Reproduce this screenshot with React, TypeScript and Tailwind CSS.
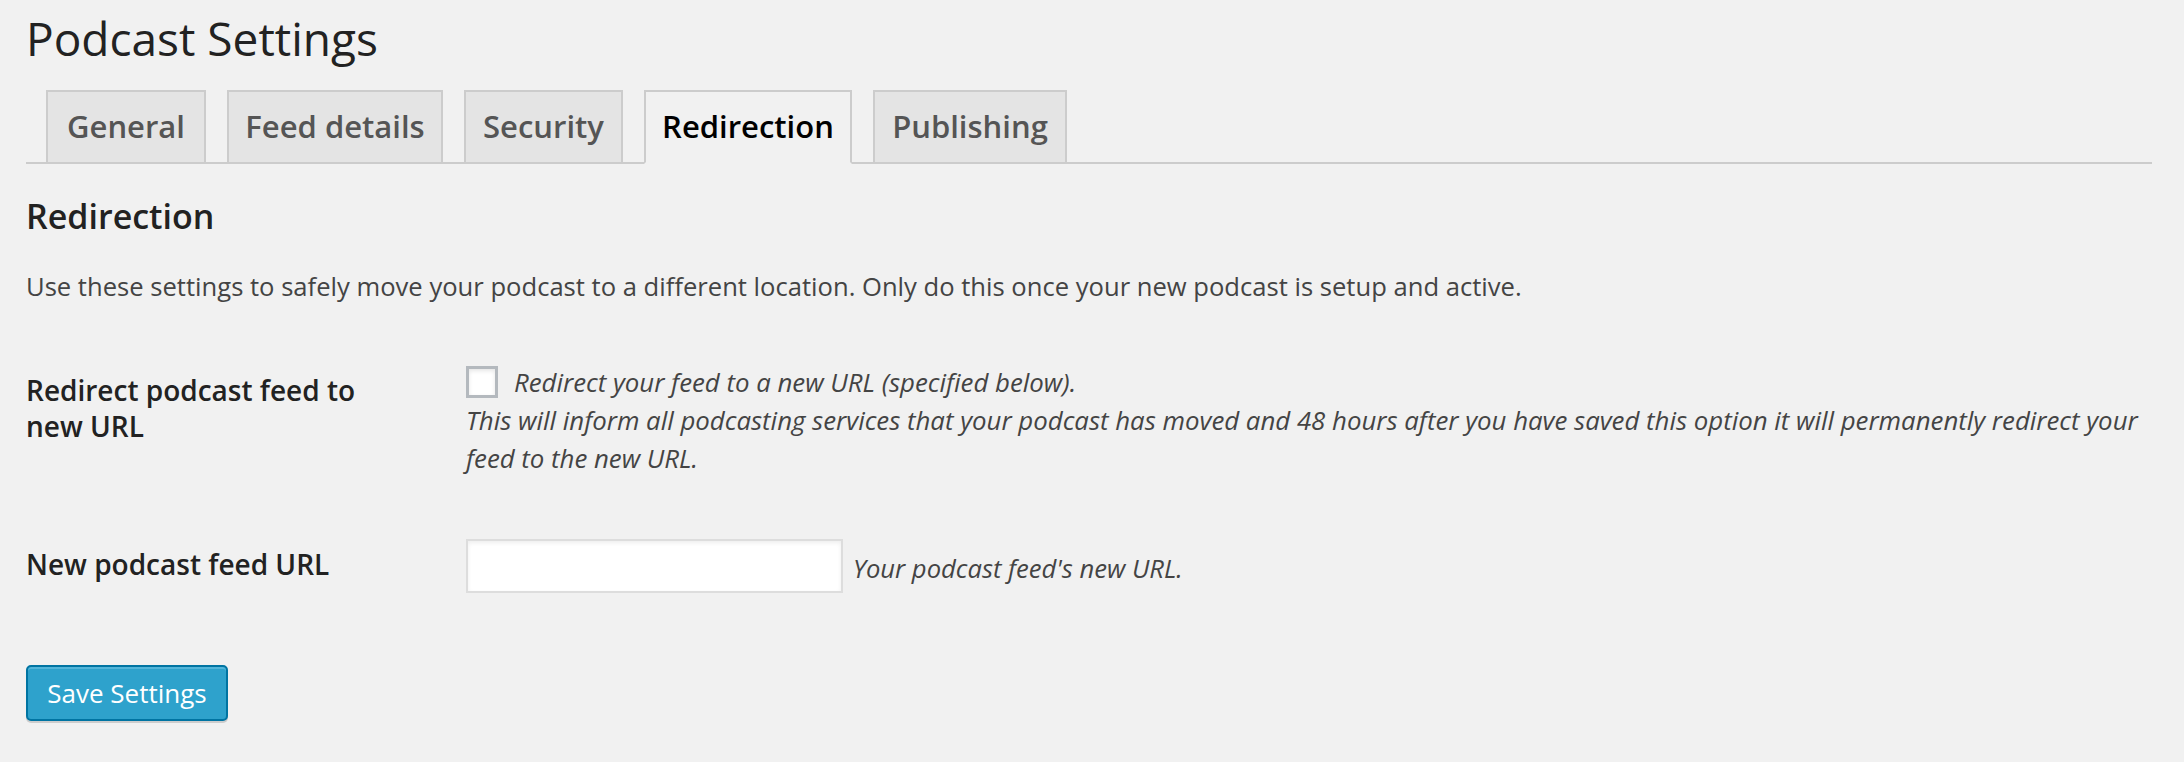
const tabs = [
  { label: "General", width: "w-[160px]" },
  { label: "Feed details", width: "w-[216px]" },
  { label: "Security", width: "w-[159px]" },
  { label: "Redirection", width: "w-[208px]", active: true },
  { label: "Publishing", width: "w-[194px]" },
];

function NavTabs() {
  return (
    <nav className="mt-[25px] flex h-[74px] gap-[21px] border-b-2 border-[#cccccc] pl-[20px]">
      {tabs.map((tab) => (
        <a
          key={tab.label}
          href="#"
          className={
            "-mb-[2px] block h-[74px] border-2 pb-[4px] text-center text-[31px] font-semibold leading-[68px] " +
            tab.width +
            (tab.active
              ? " border-[#cccccc] border-b-[#f1f1f1] bg-[#f1f1f1] text-black"
              : " border-[#cccccc] bg-[#e4e4e4] text-[#555555]")
          }
        >
          {tab.label}
        </a>
      ))}
    </nav>
  );
}

export default function App() {
  return (
    <div
      className="min-h-[762px] w-full bg-[#f1f1f1] pl-[26px] pr-[32px] pt-[11px]"
      style={{ fontFamily: '"Open Sans", "Noto Sans", sans-serif' }}
    >
      <h2 className="h-[54px] text-[46px] font-normal leading-[54px] text-[#222222]">Podcast Settings</h2>

      <NavTabs />

      <h3 className="mt-[30px] text-[34px] font-semibold leading-[44px] text-[#222222]">Redirection</h3>
      <p className="mt-[31px] text-[25.6px] leading-[36px] text-[#444444]">
        Use these settings to safely move your podcast to a different location. Only do this once your new podcast is setup and active.
      </p>

      {/* form table */}
      <div className="mt-[58px] grid grid-cols-[440px_1fr]">
        <div className="w-[364px] pt-[9px] text-[28px] font-semibold leading-[36px] text-[#222222]">Redirect podcast feed to new URL</div>
        <div className="text-[25.8px] leading-[38px] text-[#444444]">
          <label className="flex h-[38px] items-center gap-[16px]">
            <input
              type="checkbox"
              className="h-[32px] w-[32px] shrink-0 appearance-none border-[3px] border-[#b4b9be] bg-white shadow-[inset_0_2px_4px_rgba(0,0,0,0.1)]"
            />
            <span className="italic">Redirect your feed to a new URL (specified below).</span>
          </label>
          <p className="italic">
            This will inform all podcasting services that your podcast has moved and 48 hours after you have saved this option it will permanently redirect your feed to the new URL.
          </p>
        </div>

        <div className="mt-[62px] pt-[7px] text-[28px] font-semibold leading-[36px] text-[#222222]">New podcast feed URL</div>
        <div className="mt-[62px] flex items-center gap-[10px]">
          <input
            type="text"
            className="h-[54px] w-[377px] border-2 border-[#dddddd] bg-white shadow-[inset_0_2px_4px_rgba(0,0,0,0.07)] outline-none"
          />
          <span className="mt-[6px] text-[25.6px] italic leading-[36px] text-[#444444]">Your podcast feed's new URL.</span>
        </div>
      </div>

      <button
        type="button"
        className="mt-[72px] h-[56px] w-[202px] rounded-[5px] border-2 border-[#0074a2] bg-[#2ea2cc] text-[26px] leading-[50px] text-white shadow-[inset_0_2px_0_rgba(120,200,230,0.5),0_2px_0_rgba(0,0,0,0.15)]"
      >
        Save Settings
      </button>
    </div>
  );
}
